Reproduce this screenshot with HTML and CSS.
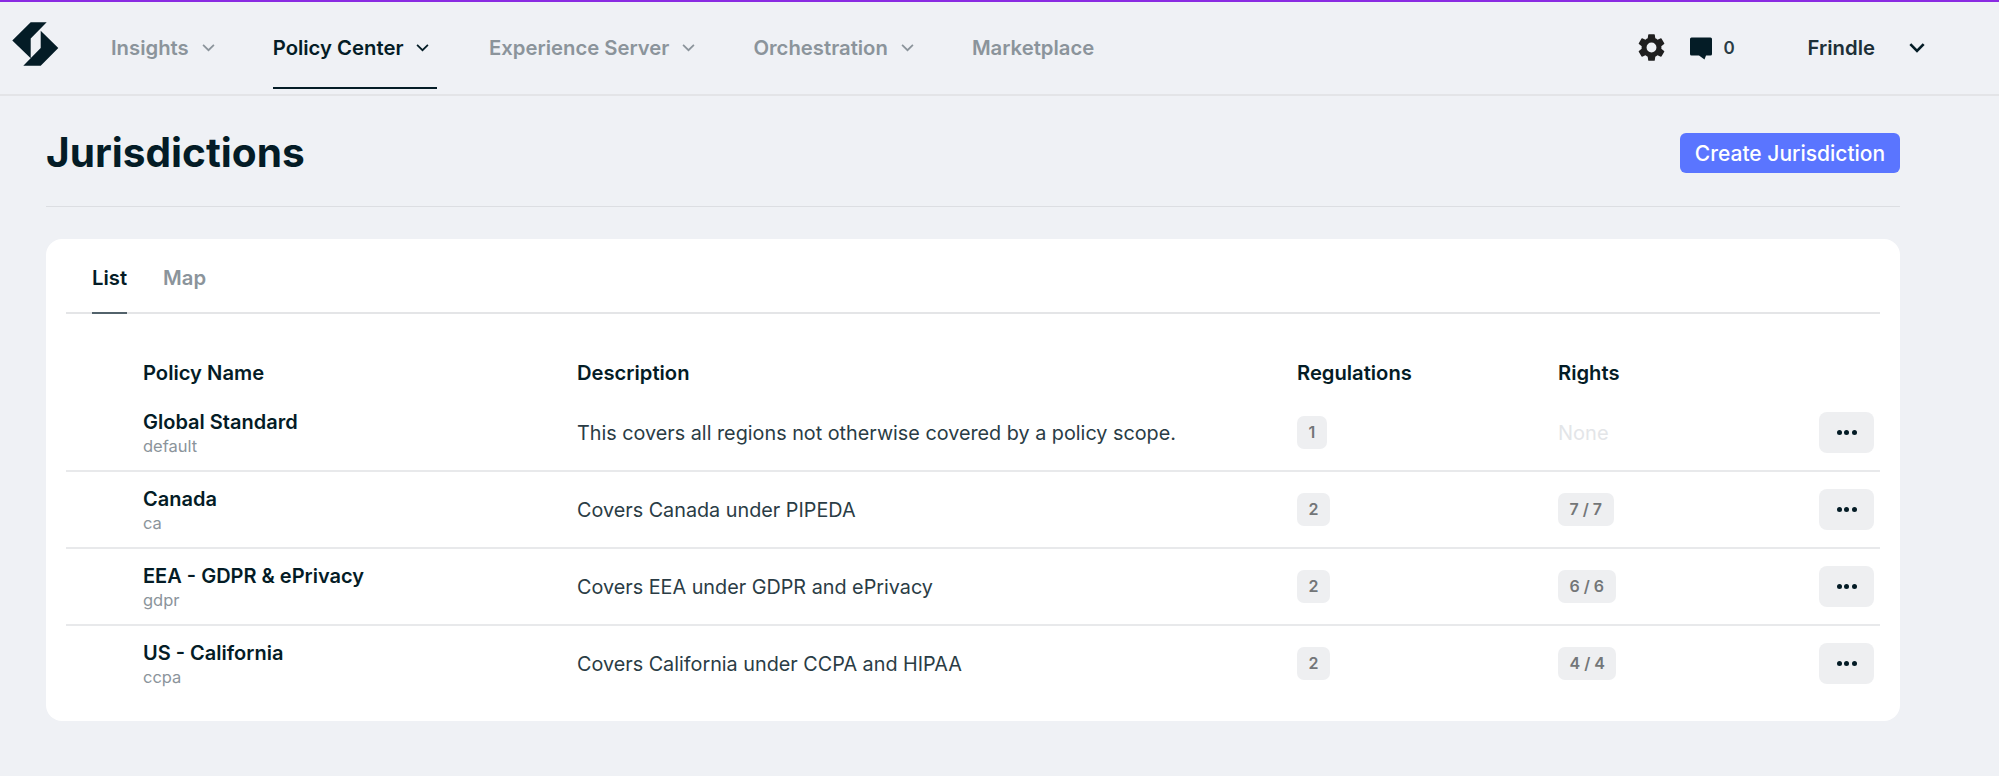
FILE: index.html
```html
<!DOCTYPE html>
<html lang="en">
<head>
    <meta charset="UTF-8">
    <title>Jurisdictions</title>
    <link rel="stylesheet" href="styles.css">
</head>
<body>
    <!-- Top navigation -->
    <header class="topbar">
        <svg class="logo" viewBox="0 0 48 46" width="48" height="46">
            <path d="M18.700 0.300H34.700L18.700 16.500V36.300L0.300 18.500Z" fill="#041c26"/>
            <path d="M28.700 8.700L46.300 26L28.700 43.700H11.300L28.700 26Z" fill="#041c26"/>
        </svg>
        <nav class="nav">
            <a class="nav-item">Insights
                <svg class="chev" viewBox="0 0 12 8"><path d="M1 1.500L6 6.500L11 1.500"/></svg>
            </a>
            <a class="nav-item active">Policy Center
                <svg class="chev" viewBox="0 0 12 8"><path d="M1 1.500L6 6.500L11 1.500"/></svg>
            </a>
            <a class="nav-item">Experience Server
                <svg class="chev" viewBox="0 0 12 8"><path d="M1 1.500L6 6.500L11 1.500"/></svg>
            </a>
            <a class="nav-item">Orchestration
                <svg class="chev" viewBox="0 0 12 8"><path d="M1 1.500L6 6.500L11 1.500"/></svg>
            </a>
            <a class="nav-item">Marketplace</a>
        </nav>
        <div class="user-area">
            <svg class="gear" viewBox="0 0 24 24" width="33" height="33"><path fill="#1f1f1f" d="M19.14 12.94c.04-.3.06-.61.06-.94s-.02-.64-.07-.94l2.03-1.58a.49.49 0 0 0 .12-.61l-1.92-3.32a.49.49 0 0 0-.59-.22l-2.39.96a7 7 0 0 0-1.62-.94l-.36-2.54a.48.48 0 0 0-.48-.41h-3.84a.48.48 0 0 0-.47.41l-.36 2.54c-.59.24-1.13.57-1.62.94l-2.39-.96a.49.49 0 0 0-.59.22L2.74 8.87a.48.48 0 0 0 .12.61l2.03 1.58c-.05.3-.09.63-.09.94s.02.64.07.94l-2.03 1.58a.49.49 0 0 0-.12.61l1.92 3.32c.12.22.37.29.59.22l2.39-.96c.5.38 1.03.7 1.62.94l.36 2.54c.05.24.24.41.48.41h3.84c.24 0 .44-.17.47-.41l.36-2.54c.59-.24 1.13-.56 1.62-.94l2.39.96c.22.08.47 0 .59-.22l1.92-3.32a.48.48 0 0 0-.12-.61zM12 15.6A3.6 3.6 0 1 1 12 8.4a3.6 3.6 0 0 1 0 7.2z"/></svg>
            <svg class="comment" viewBox="0 0 24 24" width="24" height="24"><path fill="#041c26" d="M2.500 0.500H21.500A1.500 1.500 0 0 1 23 2V17A1.500 1.500 0 0 1 21.500 18.500H17L15.500 22.500L10 18.500H2.500A1.500 1.500 0 0 1 1 17V2A1.500 1.500 0 0 1 2.500 0.500Z"/></svg>
            <span class="comment-count">0</span>
            <span class="user-name">Frindle</span>
            <svg class="chev user-chev" viewBox="0 0 12 8"><path d="M1 1.500L6 6.500L11 1.500"/></svg>
        </div>
    </header>

    <main class="page">
        <div class="page-head">
            <h1>Jurisdictions</h1>
            <button class="btn-create">Create Jurisdiction</button>
        </div>

        <section class="card">
            <div class="tabs">
                <a class="tab active">List</a>
                <a class="tab">Map</a>
            </div>

            <div class="row row-head">
                <div>Policy Name</div>
                <div>Description</div>
                <div>Regulations</div>
                <div>Rights</div>
                <div></div>
            </div>

            <div class="row">
                <div class="name"><strong>Global Standard</strong><span>default</span></div>
                <div class="desc">This covers all regions not otherwise covered by a policy scope.</div>
                <div><span class="pill">1</span></div>
                <div class="none">None</div>
                <div class="actions"><button class="btn-more"><i></i><i></i><i></i></button></div>
            </div>
            <div class="row">
                <div class="name"><strong>Canada</strong><span>ca</span></div>
                <div class="desc">Covers Canada under PIPEDA</div>
                <div><span class="pill">2</span></div>
                <div><span class="pill">7 / 7</span></div>
                <div class="actions"><button class="btn-more"><i></i><i></i><i></i></button></div>
            </div>
            <div class="row">
                <div class="name"><strong>EEA - GDPR &amp; ePrivacy</strong><span>gdpr</span></div>
                <div class="desc">Covers EEA under GDPR and ePrivacy</div>
                <div><span class="pill">2</span></div>
                <div><span class="pill">6 / 6</span></div>
                <div class="actions"><button class="btn-more"><i></i><i></i><i></i></button></div>
            </div>
            <div class="row last">
                <div class="name"><strong>US - California</strong><span>ccpa</span></div>
                <div class="desc">Covers California under CCPA and HIPAA</div>
                <div><span class="pill">2</span></div>
                <div><span class="pill">4 / 4</span></div>
                <div class="actions"><button class="btn-more"><i></i><i></i><i></i></button></div>
            </div>
        </section>
    </main>
</body>
</html>
```

FILE: styles.css
```css
/* Global Styles */
body {
    font-family: 'Inter', sans-serif;
    background-color: #eff1f5;
    color: #041c26;
    margin: 0;
    padding: 0;
    height: 776px;
    overflow: hidden;
}

/* Top navigation */
.topbar {
    display: flex;
    align-items: center;
    height: 92px;
    border-top: 2px solid #8a2be2;
    border-bottom: 2px solid #e3e4e7;
    padding-left: 12px;
    padding-right: 74px;
}

.logo {
    flex: none;
    margin-top: -6px;
}

.nav {
    display: flex;
    align-self: flex-start;
    margin-left: 51px;
    gap: 52px;
}

.nav-item {
    display: flex;
    align-items: center;
    gap: 13px;
    height: 87px;
    padding-top: 5px;
    padding-right: 6px;
    font-size: 20.3px;
    font-weight: 600;
    color: #8b949b;
    box-sizing: border-box;
    border-bottom: 2px solid transparent;
}

.nav-item.active {
    color: #041c26;
    border-bottom-color: #041c26;
    padding-right: 7.5px;
}

.chev {
    width: 13px;
    height: 9px;
    fill: none;
    stroke: currentColor;
    stroke-width: 1.6;
}

.user-area {
    display: flex;
    align-items: center;
    margin-left: auto;
    margin-top: -1px;
}

.comment {
    margin-left: 21px;
    margin-top: 3px;
}

.comment-count {
    margin-left: 10px;
    font-size: 17px;
    font-weight: 600;
    color: #2a3c45;
}

.user-name {
    margin-left: 73px;
    font-size: 20.3px;
    font-weight: 600;
    color: #1d3038;
}

.user-chev {
    width: 16px;
    height: 11px;
    margin-left: 34px;
    stroke-width: 2;
}

/* Page */
.page {
    padding: 0 99px 0 46px;
}

.page-head {
    display: flex;
    justify-content: space-between;
    align-items: center;
    height: 106px;
    padding-top: 4px;
    border-bottom: 1px solid #dcdee2;
}

h1 {
    margin: 0;
    font-size: 40.6px;
    font-weight: 700;
    line-height: 48px;
    color: #041c26;
}

.btn-create {
    height: 40px;
    width: 220px;
    padding: 0;
    border: none;
    border-radius: 6px;
    background-color: #5a75ff;
    color: #ffffff;
    font-family: inherit;
    font-size: 21px;
    font-weight: 500;
}

/* Card */
.card {
    margin-top: 32px;
    height: 482px;
    padding: 0 20px;
    background-color: #ffffff;
    border-radius: 16px;
}

.tabs {
    display: flex;
    gap: 36px;
    height: 73px;
    padding-left: 26px;
    border-bottom: 2px solid #e4e5e7;
}

.tab {
    height: 75px;
    box-sizing: border-box;
    padding-top: 26px;
    font-size: 20.3px;
    font-weight: 600;
    color: #8b949b;
}

.tab.active {
    color: #041c26;
    border-bottom: 2px solid #52626b;
}

/* Table rows */
.row {
    display: grid;
    grid-template-columns: 434px 720px 261px 261px 1fr;
    align-items: center;
    height: 75px;
    padding-left: 77px;
    padding-right: 6px;
    border-bottom: 2px solid #e8e9eb;
    font-size: 20px;
}

.row.last {
    border-bottom: none;
}

.row-head {
    height: 81px;
    padding-top: 35px;
    box-sizing: border-box;
    border-bottom: none;
    font-size: 20.2px;
    font-weight: 600;
}

.name strong {
    display: block;
    font-weight: 600;
    line-height: 26px;
}

.name span {
    display: block;
    font-size: 16.500px;
    line-height: 22px;
    color: #8b949b;
}

.desc {
    font-size: 19.800px;
    color: #2a3c45;
}

.pill {
    display: inline-block;
    padding: 0 11.500px;
    height: 33px;
    line-height: 33px;
    border-radius: 7px;
    background-color: #eeeff1;
    color: #737678;
    font-size: 16px;
    font-weight: 600;
}

.none {
    color: #e3e5e8;
}

.actions {
    display: flex;
    justify-content: flex-end;
}

.btn-more {
    display: flex;
    align-items: center;
    justify-content: center;
    gap: 2.500px;
    width: 55px;
    height: 41px;
    padding: 0;
    border: none;
    border-radius: 8px;
    background-color: #eeeff1;
}

.btn-more i {
    width: 5px;
    height: 5px;
    border-radius: 50%;
    background-color: #041c26;
}
```
